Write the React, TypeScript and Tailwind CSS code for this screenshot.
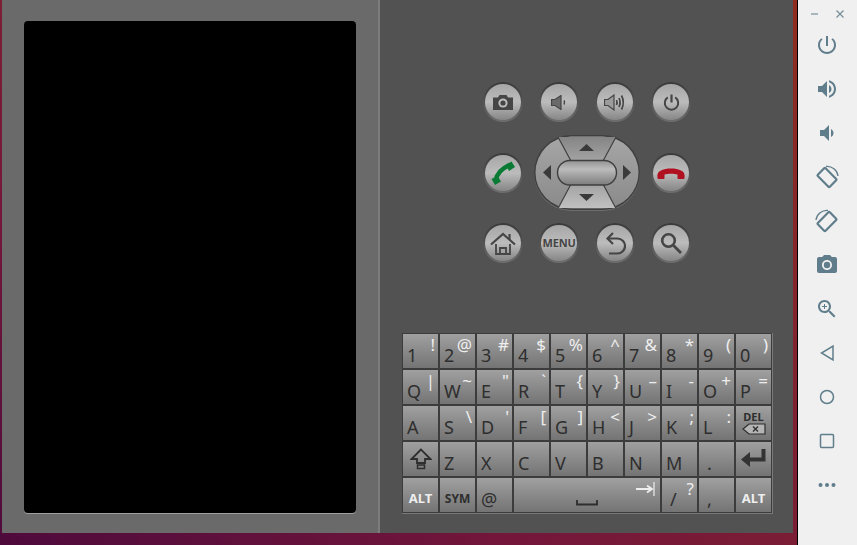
import type { ReactNode } from "react";

const font = "font-['Noto_Sans','Open_Sans',sans-serif]";
const keyBg = "bg-gradient-to-b from-[#a0a0a0] to-[#747474]";

type KeyDef = { main?: ReactNode; alt?: string };

const rows: KeyDef[] = [
  { main: "1", alt: "!" }, { main: "2", alt: "@" }, { main: "3", alt: "#" }, { main: "4", alt: "$" }, { main: "5", alt: "%" },
  { main: "6", alt: "^" }, { main: "7", alt: "&" }, { main: "8", alt: "*" }, { main: "9", alt: "(" }, { main: "0", alt: ")" },
  { main: "Q", alt: "|" }, { main: "W", alt: "~" }, { main: "E", alt: '"' }, { main: "R", alt: "`" }, { main: "T", alt: "{" },
  { main: "Y", alt: "}" }, { main: "U", alt: "–" }, { main: "I", alt: "-" }, { main: "O", alt: "+" }, { main: "P", alt: "=" },
  { main: "A" }, { main: "S", alt: "\\" }, { main: "D", alt: "'" }, { main: "F", alt: "[" }, { main: "G", alt: "]" },
  { main: "H", alt: "<" }, { main: "J", alt: ">" }, { main: "K", alt: ";" }, { main: "L", alt: ":" },
];

function Key({ main, alt, className = "" }: KeyDef & { className?: string }) {
  return (
    <div className={`flex justify-between pl-[4px] pr-[3px] ${keyBg} ${font} ${className}`}>
      <span className="self-end pb-[1px] text-[18px] leading-[24px] text-[#2e2e2e]">{main}</span>
      {alt && <span className="self-start pt-[1px] text-[17px] leading-[20px] text-[#eeeeee]">{alt}</span>}
    </div>
  );
}

function IconKey({ children }: { children: ReactNode }) {
  return <div className={`flex items-center justify-center ${keyBg} ${font}`}>{children}</div>;
}

function Round({ children }: { children: ReactNode }) {
  return (
    <div className="flex h-10 w-10 items-center justify-center rounded-full bg-gradient-to-b from-[#3a3a3a] to-[#6e6e6e]">
      <div className="flex h-9 w-9 items-center justify-center rounded-full bg-gradient-to-b from-[#a6a6a6] via-[#bcbcbc] to-[#868686]">
        {children}
      </div>
    </div>
  );
}

function Dpad() {
  return (
    <svg width="106" height="76" viewBox="0 0 106 76" className="block">
      <defs>
        <linearGradient id="side" x1="0" y1="0" x2="0" y2="1">
          <stop offset="0" stopColor="#a6a6a6" />
          <stop offset="1" stopColor="#8a8a8a" />
        </linearGradient>
        <linearGradient id="up" x1="0" y1="0" x2="0" y2="1">
          <stop offset="0" stopColor="#858585" />
          <stop offset="1" stopColor="#a2a2a2" />
        </linearGradient>
        <linearGradient id="down" x1="0" y1="0" x2="0" y2="1">
          <stop offset="0" stopColor="#a4a4a4" />
          <stop offset="1" stopColor="#c0c0c0" />
        </linearGradient>
        <linearGradient id="mid" x1="0" y1="0" x2="0" y2="1">
          <stop offset="0" stopColor="#929292" />
          <stop offset="0.35" stopColor="#bcbcbc" />
          <stop offset="1" stopColor="#7c7c7c" />
        </linearGradient>
      </defs>
      <rect x="0" y="1" width="106" height="75" rx="37.5" fill="#6e6e6e" />
      <rect x="0" y="0" width="106" height="75" rx="37.5" fill="#3f3f3f" />
      <rect x="1.5" y="1.5" width="103" height="72" rx="36" fill="url(#side)" />
      <path d="M24 2 L82 2 L69 25 L36 25 Z" fill="url(#up)" />
      <path d="M36 50 L69 50 L82 73 L24 73 Z" fill="url(#down)" />
      <path d="M24 2 L37 26 M82 2 L69 26 M37 49 L24 73.5 M69 49 L82 73.5" stroke="#404040" strokeWidth="1.2" fill="none" />
      <rect x="23.5" y="25.5" width="59" height="24.5" rx="12.2" fill="url(#mid)" stroke="#3f3f3f" strokeWidth="1.4" />
      <path d="M52.5 9 L60 16 L45 16 Z" fill="#3a3a3a" />
      <path d="M45 59 L60 59 L52.5 66 Z" fill="#3a3a3a" />
      <path d="M9 37.5 L17 30 L17 45 Z" fill="#3a3a3a" />
      <path d="M97 37.5 L89 30 L89 45 Z" fill="#3a3a3a" />
    </svg>
  );
}

const ink = "#454545";

const hw = {
  camera: (
    <svg width="22" height="15" viewBox="0 0 22 15">
      <path d="M1 2.5h5L7.500 0h7L16 2.500h5V15H1z" fill={ink} />
      <circle cx="11" cy="8" r="4.600" fill="#bdbdbd" />
      <circle cx="11" cy="8" r="2.600" fill={ink} />
    </svg>
  ),
  volDown: (
    <svg width="16" height="15" viewBox="0 0 16 15">
      <path d="M0.500 4.500h3.500l6-4v14l-6-4H0.500z" fill="#6a6a6a" stroke={ink} strokeWidth="1.200" />
      <path d="M13 5.500q1.200 2 0 4" fill="none" stroke={ink} strokeWidth="1.500" />
    </svg>
  ),
  volUp: (
    <svg width="23" height="17" viewBox="0 0 23 17">
      <path d="M0.500 5.500h3.500l6-4.500v15l-6-4.500H0.500z" fill="#9c9c9c" stroke={ink} strokeWidth="1.200" />
      <path d="M12.500 6q1.200 2.500 0 5M15 4q2.200 4.500 0 9M17.500 1.500q3.600 7 0 14" fill="none" stroke={ink} strokeWidth="1.700" />
    </svg>
  ),
  power: (
    <svg width="17" height="17" viewBox="0 0 17 17">
      <path d="M4.800 3.400a6.700 6.700 0 1 0 7.400 0" fill="none" stroke={ink} strokeWidth="2" />
      <path d="M8.500 0.500v8" stroke={ink} strokeWidth="2.200" />
    </svg>
  ),
  call: (
    <svg width="24" height="24" viewBox="0 0 24 24">
      <path d="M4.500 20 Q6 9.500 18.500 4" fill="none" stroke="#0a7a35" strokeWidth="4.600" />
      <path d="M15 3.500 L20.500 0.500 L24 6 L18 10z" fill="#0a7a35" />
      <path d="M0.500 18 L6.500 15 L10 20.500 L4 24z" fill="#0a7a35" />
    </svg>
  ),
  end: (
    <svg width="28" height="11" viewBox="0 0 28 11">
      <path d="M0.500 10C0 6 1 4 3 3 6.500 1 10.500 0.500 14 0.500S21.500 1 25 3c2 1 3 3 2.500 7-.1.600-.5 1-1 1h-5c-.6 0-1-.4-1-1V6.500c-3.500-1-9.500-1-13 0V10c0 .6-.4 1-1 1h-5c-.5 0-.9-.4-1-1z" fill="#b01020" />
    </svg>
  ),
  home: (
    <svg width="26" height="23" viewBox="0 0 26 23">
      <path d="M1 12.500L13 2l12 10.500" fill="none" stroke={ink} strokeWidth="2.200" />
      <path d="M19.500 2v6" stroke={ink} strokeWidth="2.200" />
      <path d="M6 12v10h14V12M10 22v-6h6v6" fill="none" stroke={ink} strokeWidth="1.800" />
    </svg>
  ),
  back: (
    <svg width="21" height="23" viewBox="0 0 21 23">
      <path d="M8 1L2.500 6.500 8 12" fill="none" stroke={ink} strokeWidth="2.200" />
      <path d="M3 6.500h9.500a7.500 7.500 0 0 1 0 15H4" fill="none" stroke={ink} strokeWidth="2.200" />
    </svg>
  ),
  search: (
    <svg width="22" height="22" viewBox="0 0 22 22">
      <circle cx="8.500" cy="8.500" r="6.300" fill="none" stroke={ink} strokeWidth="2.600" />
      <path d="M13.500 13.500L21 21" stroke={ink} strokeWidth="2.800" />
    </svg>
  ),
};

const slate = "#607d8b";

function Tool({ children }: { children: ReactNode }) {
  return <div className="flex h-11 items-center justify-center pr-[2px]">{children}</div>;
}

function Mat({ d }: { d: string }) {
  return (
    <svg width="24" height="24" viewBox="0 0 24 24" fill={slate}>
      <path d={d} />
    </svg>
  );
}

export default function App() {
  return (
    <div className="flex h-[545px] w-[857px] overflow-hidden bg-gradient-to-tr from-[#4e0a3c] via-[#74163a] via-30% to-[#902e1a]">
      <div className="flex-1 pb-3 pl-[2px] pr-1">
        <div className="flex h-full">
          <div className="w-[376px] bg-[#6a6a6a] pb-5 pl-[22px] pr-[22px] pt-[21px]">
            <div className="h-full rounded-[4px] bg-black shadow-[0_1px_0_#a0a0a0]" />
          </div>
          <div className="w-[2px] bg-[#7c7c7c]" />
          <div className="flex-1 bg-[#525252] pl-[22px] pt-[82px]">
            <div className="flex flex-col pl-[81px]">
              <div className="flex gap-4">
                <Round>{hw.camera}</Round>
                <Round>{hw.volDown}</Round>
                <Round>{hw.volUp}</Round>
                <Round>{hw.power}</Round>
              </div>
              <div className="mt-[13px] flex items-center gap-[11px]">
                <Round>{hw.call}</Round>
                <Dpad />
                <Round>{hw.end}</Round>
              </div>
              <div className="mt-[12px] flex gap-4">
                <Round>{hw.home}</Round>
                <Round>
                  <span className={`text-[11px] font-bold tracking-[-0.2px] text-[#454545] ${font}`}>MENU</span>
                </Round>
                <Round>{hw.back}</Round>
                <Round>{hw.search}</Round>
              </div>
            </div>
            <div className="mt-[70px] w-fit border-b border-r border-[#7a7a7a] bg-[#3c3c3c] p-[1px]">
              <div className="grid grid-cols-[repeat(10,35px)] grid-rows-[repeat(5,34px)] gap-[2px]">
                {rows.map((k, i) => (
                  <Key key={i} main={k.main} alt={k.alt} />
                ))}
                <div className={`flex flex-col items-center justify-center ${keyBg} ${font}`}>
                  <span className="text-[11px] font-bold leading-[12px] text-[#2e2e2e]">DEL</span>
                  <svg width="24" height="12" viewBox="0 0 24 12">
                    <path d="M1 6l6-5h16v10H7z" fill="#b4b4b4" stroke="#2e2e2e" strokeWidth="1.200" />
                    <path d="M11 3.500l5 5M16 3.500l-5 5" stroke="#2e2e2e" strokeWidth="1.400" />
                  </svg>
                </div>
                <IconKey>
                  <svg width="22" height="22" viewBox="0 0 22 22">
                    <path d="M11 1.500L1.500 11h5.500v4h8v-4h5.500z" fill="none" stroke="#2e2e2e" strokeWidth="1.800" />
                    <path d="M7.500 17h7v3.500h-7z" fill="none" stroke="#2e2e2e" strokeWidth="1.500" />
                  </svg>
                </IconKey>
                {["Z", "X", "C", "V", "B", "N", "M"].map((c) => (
                  <Key key={c} main={c} />
                ))}
                <Key main="." className="pl-[8px]" />
                <IconKey>
                  <svg width="25" height="20" viewBox="0 0 25 20">
                    <path d="M22.500 0v10.500H7" fill="none" stroke="#333333" strokeWidth="4" />
                    <path d="M0 10.500L9 3v15z" fill="#333333" />
                  </svg>
                </IconKey>
                <IconKey>
                  <span className="pt-[8px] text-[13px] font-bold text-[#eeeeee]">ALT</span>
                </IconKey>
                <IconKey>
                  <span className="pt-[8px] text-[12px] font-bold text-[#2e2e2e]">SYM</span>
                </IconKey>
                <Key main="@" className="pl-[2px]" />
                <div className={`col-span-4 flex flex-col items-center ${keyBg}`}>
                  <div className="flex w-full justify-end pr-[5px] pt-[4px]">
                    <svg width="19" height="14" viewBox="0 0 19 14">
                      <path d="M0 7h15M11 3.500l5 3.500-5 3.500" fill="none" stroke="#eeeeee" strokeWidth="1.800" />
                      <path d="M18 0v14" stroke="#eeeeee" strokeWidth="1.200" />
                    </svg>
                  </div>
                  <svg width="22" height="6" viewBox="0 0 22 6" className="mt-[4px]">
                    <path d="M1 0v4.500h20V0" fill="none" stroke="#2e2e2e" strokeWidth="1.800" />
                  </svg>
                </div>
                <Key main="/" alt="?" className="pl-[8px]" />
                <Key main="," className="pl-[8px]" />
                <IconKey>
                  <span className="pt-[8px] text-[13px] font-bold text-[#eeeeee]">ALT</span>
                </IconKey>
              </div>
            </div>
          </div>
        </div>
      </div>
      <div className="w-[60px] border-l border-black bg-[#f0f0f0] pt-[1px]">
        <div className="flex h-[22px] items-center justify-between pl-[12px] pr-[12px] pt-[4px]">
          <svg width="10" height="10" viewBox="0 0 10 10"><path d="M1 5h7" stroke="#90a4ae" strokeWidth="1.500" /></svg>
          <svg width="10" height="10" viewBox="0 0 10 10"><path d="M1.500 1.500l7 7M8.500 1.500l-7 7" stroke="#78909c" strokeWidth="1.300" /></svg>
        </div>
        <Tool>
          <Mat d="M13 3h-2v10h2V3zm4.830 2.170l-1.420 1.420C17.990 7.860 19 9.810 19 12c0 3.870-3.130 7-7 7s-7-3.130-7-7c0-2.190 1.010-4.140 2.580-5.420L6.170 5.170C4.230 6.820 3 9.260 3 12c0 4.970 4.030 9 9 9s9-4.030 9-9c0-2.740-1.230-5.180-3.170-6.830z" />
        </Tool>
        <Tool>
          <Mat d="M3 9v6h4l5 5V4L7 9H3zm13.500 3c0-1.770-1.020-3.290-2.500-4.030v8.050c1.480-.73 2.500-2.250 2.500-4.020zM14 3.230v2.060c2.890.86 5 3.540 5 6.710s-2.110 5.850-5 6.710v2.060c4.010-.91 7-4.490 7-8.770s-2.990-7.860-7-8.770z" />
        </Tool>
        <Tool>
          <Mat d="M18.500 12c0-1.770-1.020-3.290-2.500-4.030v8.050c1.480-.73 2.500-2.250 2.500-4.020zM5 9v6h4l5 5V4L9 9H5z" />
        </Tool>
        <Tool>
          <svg width="24" height="24" viewBox="0 0 24 24" fill="none" stroke={slate}>
            <rect x="6.500" y="4" width="11" height="17" rx="1" strokeWidth="2.200" transform="rotate(-45 12 12.500)" />
            <path d="M11 1.500A11 11 0 0 1 23 11" strokeWidth="1.300" />
          </svg>
        </Tool>
        <Tool>
          <svg width="24" height="24" viewBox="0 0 24 24" fill="none" stroke={slate}>
            <rect x="6.500" y="4" width="11" height="17" rx="1" strokeWidth="2.200" transform="rotate(45 12 12.500)" />
            <path d="M1 11A11 11 0 0 1 13 1.500" strokeWidth="1.300" />
          </svg>
        </Tool>
        <Tool>
          <svg width="24" height="24" viewBox="0 0 24 24" fill={slate}>
            <circle cx="12" cy="12" r="3.200" />
            <path d="M9 2L7.170 4H4c-1.100 0-2 .9-2 2v12c0 1.100.9 2 2 2h16c1.100 0 2-.9 2-2V6c0-1.100-.9-2-2-2h-3.170L15 2H9zm3 15c-2.760 0-5-2.240-5-5s2.240-5 5-5 5 2.240 5 5-2.240 5-5 5z" />
          </svg>
        </Tool>
        <Tool>
          <svg width="24" height="24" viewBox="0 0 24 24" fill={slate}>
            <path d="M15.500 14h-.79l-.28-.27C15.410 12.590 16 11.110 16 9.500 16 5.910 13.090 3 9.500 3S3 5.910 3 9.500 5.910 16 9.500 16c1.610 0 3.090-.59 4.230-1.570l.27.28v.79l5 4.990L20.490 19l-4.990-5zm-6 0C7.010 14 5 11.990 5 9.500S7.010 5 9.500 5 14 7.010 14 9.500 11.990 14 9.500 14z" />
            <path d="M12 10h-2v2H9v-2H7V9h2V7h1v2h2v1z" />
          </svg>
        </Tool>
        <Tool>
          <svg width="24" height="24" viewBox="0 0 24 24" fill="none" stroke={slate} strokeWidth="1.500">
            <path d="M18 5v14L6.500 12z" />
          </svg>
        </Tool>
        <Tool>
          <svg width="24" height="24" viewBox="0 0 24 24" fill="none" stroke={slate} strokeWidth="1.500">
            <circle cx="12" cy="12" r="6.500" />
          </svg>
        </Tool>
        <Tool>
          <svg width="24" height="24" viewBox="0 0 24 24" fill="none" stroke={slate} strokeWidth="1.500">
            <rect x="5.500" y="5.500" width="13" height="13" rx="1" />
          </svg>
        </Tool>
        <Tool>
          <svg width="24" height="24" viewBox="0 0 24 24" fill={slate}>
            <circle cx="5.500" cy="12" r="2" />
            <circle cx="12" cy="12" r="2" />
            <circle cx="18.500" cy="12" r="2" />
          </svg>
        </Tool>
      </div>
    </div>
  );
}
